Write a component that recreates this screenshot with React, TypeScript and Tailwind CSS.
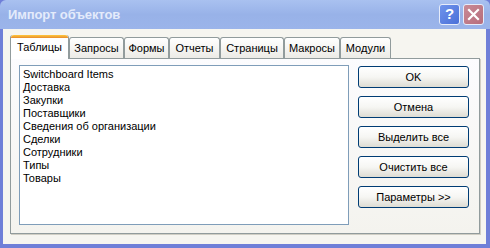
const items = [
  'Switchboard Items',
  'Доставка',
  'Закупки',
  'Поставщики',
  'Сведения об организации',
  'Сделки',
  'Сотрудники',
  'Типы',
  'Товары',
]

const tabs = ['Запросы', 'Формы', 'Отчеты', 'Страницы', 'Макросы', 'Модули']
const tabWidths = ['w-[55px]', 'w-[45px]', 'w-[51px]', 'w-[64px]', 'w-[56px]', 'w-[51px]']

const buttons = ['OK', 'Отмена', 'Выделить все', 'Очистить все', 'Параметры >>']

export default function App() {
  return (
    <div
      className="flex h-[248px] w-[490px] flex-col overflow-hidden bg-[#6f7fd8] text-[11px] text-black"
      style={{ fontFamily: '"Liberation Sans", Arial, sans-serif' }}
    >
      {/* Title bar */}
      <div className="flex h-[29px] shrink-0 items-center justify-between rounded-t-[6px] bg-gradient-to-b from-[#a9c1f0] via-[#98b2e8] to-[#9bb4ea] pl-[8px] pr-[6px]">
        <span className="text-[13px] font-bold tracking-[-0.1px] text-[#e4ebfb]">Импорт объектов</span>
        <div className="flex gap-[3px]">
          <div className="flex h-[21px] w-[21px] items-center justify-center rounded-[3px] border border-[#e6ecfa] bg-gradient-to-br from-[#6f94ec] to-[#4b6fd8] text-[15px] font-bold text-white">
            ?
          </div>
          <div className="flex h-[21px] w-[21px] items-center justify-center rounded-[3px] border border-[#e6ecfa] bg-gradient-to-br from-[#c98a96] to-[#b76d7c]">
            <svg width="13" height="13" viewBox="0 0 13 13">
              <path d="M2 2 L11 11 M11 2 L2 11" stroke="#fff" strokeWidth="2.2" strokeLinecap="square" />
            </svg>
          </div>
        </div>
      </div>

      {/* Body */}
      <div className="mx-[3px] mb-[4px] mr-[4px] flex flex-1 flex-col bg-[#f6f5f0] pl-[7px] pr-[2px] pt-[6px]">
        {/* Tabs */}
        <div className="relative z-10 flex h-[23px] items-end">
          <div className="-mb-px flex h-[24px] w-[59px] flex-col rounded-t-[3px] border-x border-[#919b9c] bg-white">
            <div className="h-[3px] rounded-t-[3px] bg-gradient-to-b from-[#ffc83c] to-[#e68b2c]" />
            <div className="flex flex-1 items-center justify-center pb-[2px]">Таблицы</div>
          </div>
          {tabs.map((t, i) => (
            <div
              key={t}
              className={`flex h-[21px] items-center justify-center rounded-t-[3px] border border-b-0 border-[#919b9c] bg-gradient-to-b from-white to-[#ecebe6] ${tabWidths[i]}`}
            >
              {t}
            </div>
          ))}
        </div>

        {/* Panel */}
        <div className="flex h-[176px] w-[470px] border border-[#919b9c] bg-gradient-to-b from-[#fcfcfe] to-[#f4f3ee] pl-[8px] pt-[6px] shadow-[1px_1px_0_#d0cec4]">
          <div className="flex h-[160px] w-[330px] flex-col border border-[#7f9db9] bg-white pl-[3px] pt-[2px] leading-[13px]">
            {items.map((it) => (
              <div key={it}>{it}</div>
            ))}
          </div>
          <div className="ml-[9px] flex flex-col gap-[8px] pt-[1px]">
            {buttons.map((b) => (
              <div
                key={b}
                className="flex h-[22px] w-[111px] items-center justify-center rounded-[3px] border border-[#003c74] bg-gradient-to-b from-white via-[#f6f6f3] to-[#dedcd3]"
              >
                {b}
              </div>
            ))}
          </div>
        </div>
      </div>
    </div>
  )
}
